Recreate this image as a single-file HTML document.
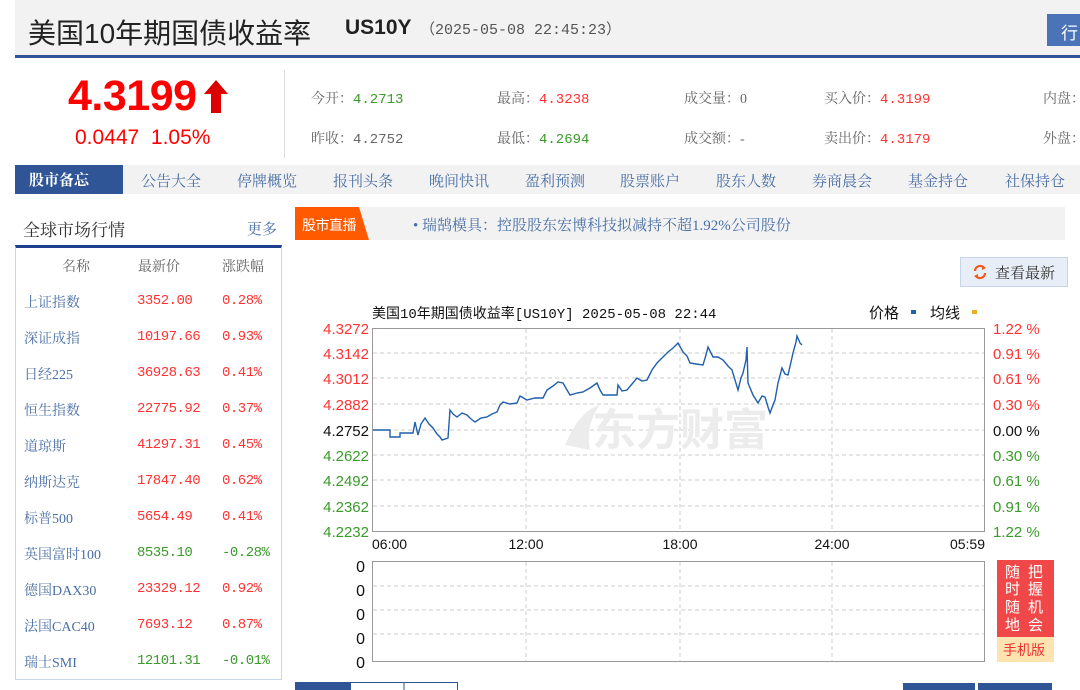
<!DOCTYPE html>
<html><head><meta charset="utf-8"><style>
*{margin:0;padding:0;box-sizing:border-box}
body{width:1080px;height:690px;overflow:hidden;background:#fff;font-family:"Liberation Serif","Noto Serif CJK SC","Noto Sans CJK SC",serif;position:relative;color:#333}
.a{position:absolute;white-space:nowrap}
.hd{left:15px;top:0;width:1065px;height:58px;background:#f2f2f2;border-bottom:3px solid #2f5597}
.t{font-family:"Liberation Sans","Noto Sans CJK SC",sans-serif}
.st{font-size:14px;color:#666}
.nav{left:15px;top:165px;width:1065px;height:29px;background:#f2f2f2}
.nv{font-size:15px;color:#4a6fa5;top:170px}
.lr{font-size:14px}
.nm{color:#4a6fa5;left:24px}
.pr{left:137px;font-family:"Liberation Mono",monospace;font-size:14px;letter-spacing:-0.5px}
.pc{left:222px;font-family:"Liberation Mono",monospace;font-size:14px;letter-spacing:-0.5px}
.r{color:#f33}.g{color:#3a9a2a}
</style></head><body>
<div class="a hd"></div>
<div class="a t" style="left:28px;top:12px;font-size:28px;color:#222">美国10年期国债收益率</div>
<div class="a t" style="left:345px;top:16px;font-size:21px;font-weight:bold;color:#222">US10Y</div>
<div class="a" style="left:420px;top:18px;font-size:15px;color:#555;font-family:'Liberation Mono','Noto Sans CJK SC',monospace">（2025-05-08 22:45:23）</div>
<div class="a t" style="left:1047px;top:14px;width:40px;height:32px;background:#4a73b8;color:#fff;font-size:17px;padding:5px 0 0 14px">行</div>

<div class="a t" style="left:68px;top:72px;font-size:43px;font-weight:bold;color:#f00;letter-spacing:-0.5px">4.3199</div>
<svg class="a" style="left:203px;top:80px" width="26" height="34"><path d="M13 0 L25 14 L18 14 L18 33 L8 33 L8 14 L1 14Z" fill="#d00"/></svg>
<div class="a t" style="left:75px;top:126px;font-size:21px;color:#f00">0.0447&nbsp;&nbsp;1.05%</div>
<div class="a" style="left:284px;top:70px;width:1px;height:88px;background:#ddd"></div>

<div class="a st" style="left:311px;top:88px">今开：<span class="g" style="font-family:'Liberation Mono'">4.2713</span></div>
<div class="a st" style="left:311px;top:128px">昨收：<span style="font-family:'Liberation Mono'">4.2752</span></div>
<div class="a st" style="left:497px;top:88px">最高：<span class="r" style="font-family:'Liberation Mono'">4.3238</span></div>
<div class="a st" style="left:497px;top:128px">最低：<span class="g" style="font-family:'Liberation Mono'">4.2694</span></div>
<div class="a st" style="left:684px;top:88px">成交量：0</div>
<div class="a st" style="left:684px;top:128px">成交额：-</div>
<div class="a st" style="left:824px;top:88px">买入价：<span class="r" style="font-family:'Liberation Mono'">4.3199</span></div>
<div class="a st" style="left:824px;top:128px">卖出价：<span class="r" style="font-family:'Liberation Mono'">4.3179</span></div>
<div class="a st" style="left:1043px;top:88px">内盘：</div>
<div class="a st" style="left:1043px;top:128px">外盘：</div>

<div class="a nav"></div>
<div class="a" style="left:15px;top:165px;width:108px;height:29px;background:#2f5597;color:#fff;font-weight:bold;font-size:15px;padding:4px 0 0 14px">股市备忘</div>
<div class="a nv" style="left:141px">公告大全</div>
<div class="a nv" style="left:237px">停牌概览</div>
<div class="a nv" style="left:333px">报刊头条</div>
<div class="a nv" style="left:429px">晚间快讯</div>
<div class="a nv" style="left:525px">盈利预测</div>
<div class="a nv" style="left:620px">股票账户</div>
<div class="a nv" style="left:716px">股东人数</div>
<div class="a nv" style="left:812px">券商晨会</div>
<div class="a nv" style="left:908px">基金持仓</div>
<div class="a nv" style="left:1005px">社保持仓</div>

<div class="a" style="left:23px;top:216px;font-size:17px;color:#333">全球市场行情</div>
<div class="a" style="left:247px;top:218px;font-size:15px;color:#4a6fa5">更多</div>
<div class="a" style="left:15px;top:245px;width:267px;height:435px;border:1px solid #c8d6ea;border-top:3px solid #1f3f8f"></div>
<div class="a lr" style="left:62px;top:256px;color:#666">名称</div>
<div class="a lr" style="left:138px;top:256px;color:#666">最新价</div>
<div class="a lr" style="left:222px;top:256px;color:#666">涨跌幅</div>

<div class="a lr nm" style="top:292px">上证指数</div><div class="a pr r" style="top:293px">3352.00</div><div class="a pc r" style="top:293px">0.28%</div>
<div class="a lr nm" style="top:328px">深证成指</div><div class="a pr r" style="top:329px">10197.66</div><div class="a pc r" style="top:329px">0.93%</div>
<div class="a lr nm" style="top:364px">日经225</div><div class="a pr r" style="top:365px">36928.63</div><div class="a pc r" style="top:365px">0.41%</div>
<div class="a lr nm" style="top:400px">恒生指数</div><div class="a pr r" style="top:401px">22775.92</div><div class="a pc r" style="top:401px">0.37%</div>
<div class="a lr nm" style="top:436px">道琼斯</div><div class="a pr r" style="top:437px">41297.31</div><div class="a pc r" style="top:437px">0.45%</div>
<div class="a lr nm" style="top:472px">纳斯达克</div><div class="a pr r" style="top:473px">17847.40</div><div class="a pc r" style="top:473px">0.62%</div>
<div class="a lr nm" style="top:508px">标普500</div><div class="a pr r" style="top:509px">5654.49</div><div class="a pc r" style="top:509px">0.41%</div>
<div class="a lr nm" style="top:544px">英国富时100</div><div class="a pr g" style="top:545px">8535.10</div><div class="a pc g" style="top:545px">-0.28%</div>
<div class="a lr nm" style="top:580px">德国DAX30</div><div class="a pr r" style="top:581px">23329.12</div><div class="a pc r" style="top:581px">0.92%</div>
<div class="a lr nm" style="top:616px">法国CAC40</div><div class="a pr r" style="top:617px">7693.12</div><div class="a pc r" style="top:617px">0.87%</div>
<div class="a lr nm" style="top:652px">瑞士SMI</div><div class="a pr g" style="top:653px">12101.31</div><div class="a pc g" style="top:653px">-0.01%</div>

<div class="a" style="left:295px;top:207px;width:770px;height:33px;background:#f2f2f2"></div>
<svg class="a" style="left:295px;top:207px" width="80" height="33"><path d="M0 0H64L74 33H0Z" fill="#ff5a00"/></svg>
<div class="a" style="left:302px;top:215px;font-size:14px;color:#fff;letter-spacing:-0.5px;font-family:'Noto Sans CJK SC',sans-serif">股市直播</div>
<div class="a" style="left:413px;top:214px;font-size:15px;color:#4a6fa5">• 瑞鹄模具：控股股东宏博科技拟减持不超1.92%公司股份</div>

<div class="a" style="left:960px;top:257px;width:108px;height:30px;background:#e8eef8;border:1px solid #c5d5ea"></div>
<svg class="a" style="left:973px;top:264px" width="14" height="16"><path d="M2 7A5 5 0 0 1 11 4M12 9A5 5 0 0 1 3 12" stroke="#f05a1a" stroke-width="2.2" fill="none"/><path d="M9 1l4 3-4 2z M5 15l-4-3 4-2z" fill="#f05a1a"/></svg>
<div class="a" style="left:995px;top:262px;font-size:15px;color:#333">查看最新</div>

<svg class="a" style="left:0;top:0" width="1080" height="690">
<g font-family="Liberation Sans,Noto Sans CJK SC,sans-serif">
<text x="372" y="318" font-size="14" fill="#111" font-family="Liberation Mono,Noto Sans CJK SC,monospace">美国10年期国债收益率[US10Y] 2025-05-08 22:44</text>
<text x="869" y="318" font-size="15" fill="#111">价格</text><rect x="911" y="310" width="5" height="4" fill="#1f5fad"/>
<text x="930" y="318" font-size="15" fill="#111">均线</text><rect x="972" y="310" width="5" height="4" fill="#e8b020"/>
<g stroke="#ccc" stroke-dasharray="4,3" stroke-width="1">
<line x1="373" x2="984" y1="353" y2="353"/><line x1="373" x2="984" y1="378" y2="378"/><line x1="373" x2="984" y1="404" y2="404"/><line x1="373" x2="984" y1="430" y2="430"/><line x1="373" x2="984" y1="455" y2="455"/><line x1="373" x2="984" y1="480" y2="480"/><line x1="373" x2="984" y1="506" y2="506"/>
<line x1="526" x2="526" y1="329" y2="531"/><line x1="680" x2="680" y1="329" y2="531"/><line x1="832" x2="832" y1="329" y2="531"/>
<line x1="373" x2="984" y1="586" y2="586"/><line x1="373" x2="984" y1="610" y2="610"/><line x1="373" x2="984" y1="634" y2="634"/>
<line x1="526" x2="526" y1="562" y2="661"/><line x1="680" x2="680" y1="562" y2="661"/><line x1="832" x2="832" y1="562" y2="661"/>
</g>
<rect x="372.5" y="328.5" width="612" height="203" fill="none" stroke="#999"/>
<rect x="372.5" y="561.5" width="612" height="100" fill="none" stroke="#999"/>
<text x="680" y="445" font-size="44" font-weight="bold" fill="#ececec" text-anchor="middle" font-family="Noto Sans CJK SC,sans-serif">东方财富</text>
<path d="M565 445 Q580 410 600 405 Q585 425 590 450Z" fill="#ececec"/>
<polyline fill="none" stroke="#1f5fad" stroke-width="1.4" points="373,430 390,430 390,437 400,437 400,433 413,433 415,422 418,435 421,424 425,418 429,424 433,428 437,434 440,437 442,440 448,438 450,410 453,414 457,417 462,413 467,415 471,419 475,422 481,418 487,417 492,414 497,412 500,405 503,402 510,404 517,403 520,396 527,400 535,398 543,398 547,390 553,386 558,382 563,383 567,390 570,395 577,393 583,392 590,388 597,383 600,390 603,395 610,395 617,395 618,385 622,391 627,390 632,384 637,378 642,381 647,380 652,370 657,363 660,360 663,357 668,352 673,348 678,343 683,352 687,356 690,363 696,364 703,365 706,355 708,347 713,357 718,357 723,360 728,366 732,370 735,380 738,390 741,378 743,373 746,360 747,347 748,383 753,395 758,403 762,396 765,397 768,407 770,413 773,405 775,400 778,383 782,368 785,374 788,375 791,362 793,353 796,342 797,336 800,343 802,345"/>
<g font-size="15" text-anchor="end">
<text x="369" y="334" fill="#f33">4.3272</text><text x="369" y="359" fill="#f33">4.3142</text><text x="369" y="384" fill="#f33">4.3012</text><text x="369" y="410" fill="#f33">4.2882</text><text x="369" y="436" fill="#111">4.2752</text><text x="369" y="461" fill="#3a9a2a">4.2622</text><text x="369" y="486" fill="#3a9a2a">4.2492</text><text x="369" y="512" fill="#3a9a2a">4.2362</text><text x="369" y="537" fill="#3a9a2a">4.2232</text>
</g>
<g font-size="15">
<text x="993" y="334" fill="#f33">1.22 %</text><text x="993" y="359" fill="#f33">0.91 %</text><text x="993" y="384" fill="#f33">0.61 %</text><text x="993" y="410" fill="#f33">0.30 %</text><text x="993" y="436" fill="#111">0.00 %</text><text x="993" y="461" fill="#3a9a2a">0.30 %</text><text x="993" y="486" fill="#3a9a2a">0.61 %</text><text x="993" y="512" fill="#3a9a2a">0.91 %</text><text x="993" y="537" fill="#3a9a2a">1.22 %</text>
</g>
<g font-size="14" fill="#111">
<text x="372" y="549">06:00</text><text x="526" y="549" text-anchor="middle">12:00</text><text x="680" y="549" text-anchor="middle">18:00</text><text x="832" y="549" text-anchor="middle">24:00</text><text x="985" y="549" text-anchor="end">05:59</text>
</g>
<g font-size="16" fill="#111" text-anchor="end">
<text x="365" y="572">0</text><text x="365" y="596">0</text><text x="365" y="620">0</text><text x="365" y="644">0</text><text x="365" y="668">0</text>
</g>
<rect x="997" y="560" width="57" height="77" fill="#f04848"/>
<rect x="997" y="637" width="57" height="25" fill="#fde3b0"/>
<g font-size="15" fill="#fff" font-family="Noto Sans CJK SC,sans-serif">
<text x="1005" y="577">随</text><text x="1005" y="594">时</text><text x="1005" y="612">随</text><text x="1005" y="630">地</text>
<text x="1028" y="577">把</text><text x="1028" y="594">握</text><text x="1028" y="612">机</text><text x="1028" y="630">会</text>
</g>
<text x="1003" y="655" font-size="14" fill="#e33" font-family="Noto Sans CJK SC,sans-serif">手机版</text>
<rect x="295" y="682" width="55" height="10" fill="#2f5597"/>
<rect x="350.5" y="682.5" width="107" height="10" fill="#fff" stroke="#2f5597"/>
<line x1="404" x2="404" y1="682" y2="690" stroke="#2f5597"/>
<rect x="903" y="683" width="72" height="10" fill="#2f5597"/>
<rect x="978" y="683" width="74" height="10" fill="#2f5597"/>
</g>
</svg>
</body></html>
